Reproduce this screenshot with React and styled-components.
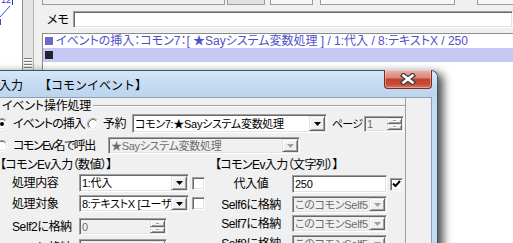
import React from "react";
import styled, { css, createGlobalStyle } from "styled-components";

const UI_FONT = `"Liberation Sans", "Noto Sans CJK JP", sans-serif`;

const GlobalStyle = createGlobalStyle`
  html, body { margin: 0; padding: 0; background: #fff; overflow: hidden; }
  #root { width: 513px; height: 243px; }
`;

const sunken = css`
  box-sizing: border-box;
  border: 1px solid;
  border-color: #a0a0a0 #ffffff #ffffff #a0a0a0;
  box-shadow: inset 1px 1px 0 #696969, inset -1px -1px 0 #e3e3e3;
`;

const raised = css`
  box-sizing: border-box;
  background: #f0f0f0;
  border: 1px solid;
  border-color: #e3e3e3 #696969 #696969 #e3e3e3;
  box-shadow: inset 1px 1px 0 #ffffff, inset -1px -1px 0 #a0a0a0;
`;

const Screen = styled.div`
  width: 513px;
  height: 243px;
  overflow: hidden;
  display: flex;
  flex-direction: column;
  background: #fff;
  font-family: ${UI_FONT};
  font-size: 12px;
  line-height: 14px;
  font-feature-settings: "palt" 1;
  color: #000;
`;

/* ---------- main editor window (behind the dialog) ---------- */

const TopArea = styled.div`
  height: 70px;
  flex-shrink: 0;
  display: flex;
`;

const TreePane = styled.div`
  width: 22px;
  background: #fff;
  border-right: 1px solid #8c8c8c;
  overflow: hidden;
  flex-shrink: 0;
`;

const Splitter = styled.div`
  width: 10px;
  flex-shrink: 0;
  background: #e4e4e4;
  border-right: 1px solid #b4b4b4;
  display: flex;
  flex-direction: column;
  justify-content: flex-end;
  align-items: center;
  padding-bottom: 1px;
`;

const MainPanel = styled.div`
  flex: 1;
  min-width: 0;
  background: #f0f0f0;
  padding-left: 8px;
  display: flex;
  flex-direction: column;
`;

const Toolbar = styled.div`
  height: 5px;
  display: flex;
  flex-shrink: 0;
`;

const ToolItem = styled.div`
  box-sizing: border-box;
  flex-shrink: 0;
  width: ${(p) => p.$w}px;
  margin-left: ${(p) => p.$ml || 0}px;
  background: ${(p) => p.$bg};
  border: 1px solid #9a9a9a;
  border-top: none;
`;

const MemoRow = styled.div`
  display: flex;
  align-items: center;
  height: 17px;
  margin-top: 6px;
`;

const MemoLabel = styled.div`
  width: 31px;
  padding-left: 5px;
  box-sizing: border-box;
  flex-shrink: 0;
`;

const MemoInput = styled.div`
  ${sunken};
  flex: 1;
  height: 17px;
  background: #fff;
`;

const EventList = styled.div`
  flex: 1;
  margin-top: 5px;
  background: #fff;
  border-top: 1px solid #8c8c8c;
  border-left: 1px solid #8c8c8c;
`;

const EventRow = styled.div`
  height: 14px;
  display: flex;
  align-items: center;
  padding-left: 2px;
  white-space: nowrap;
  color: #5050c8;
  background: ${(p) => (p.$selected ? "#c8c8f4" : "transparent")};
`;

const Marker = styled.span`
  width: 8px;
  height: 8px;
  margin-right: 3px;
  flex-shrink: 0;
  background: ${(p) => p.$color};
`;

/* ---------- dialog window ---------- */

const BottomArea = styled.div`
  flex: 1;
  min-height: 0;
  display: flex;
  background: #fff;
`;

const Dialog = styled.div`
  position: relative;
  z-index: 1;
  margin-left: -20px;
  width: 458px;
  height: 190px;
  flex-shrink: 0;
  box-sizing: border-box;
  border: 1px solid #3f5670;
  border-bottom: none;
  border-radius: 7px 7px 0 0;
  background: #c4daf1;
  box-shadow: 5px 3px 10px rgba(0, 0, 0, 0.72);
  display: flex;
  flex-direction: column;
`;

const TitleBar = styled.div`
  height: 26px;
  flex-shrink: 0;
  display: flex;
  align-items: flex-start;
  padding-left: 18px;
  border-radius: 6px 6px 0 0;
  background: linear-gradient(to bottom, #d6e7f8 0%, #c3daf1 55%, #bcd5ee 100%);
`;

const TitleText = styled.div`
  margin-top: 6px;
  font-family: "Noto Sans CJK JP", sans-serif;
  font-feature-settings: normal;
  font-size: 12px;
  line-height: 16px;
  white-space: nowrap;
`;

const TitleKind = styled.span`
  margin-left: 16px;
`;

const CloseButton = styled.div`
  margin-left: auto;
  margin-right: 5px;
  margin-top: -1px;
  width: 48px;
  height: 19px;
  box-sizing: border-box;
  border: 1px solid #7a2a22;
  border-top: none;
  border-radius: 0 0 4px 4px;
  background: linear-gradient(
    to bottom,
    #eab0a6 0%,
    #dc8678 42%,
    #c2412f 52%,
    #c64a38 78%,
    #dd7460 100%
  );
  box-shadow: inset 0 0 0 1px rgba(255, 255, 255, 0.35);
  display: flex;
  align-items: center;
  justify-content: center;
`;

const Client = styled.div`
  flex: 1;
  margin: 0 5px 0 6px;
  border: 1px solid #8ba1bb;
  border-bottom: none;
  background: #f0f0f0;
  display: flex;
`;

const Panel = styled.div`
  width: 418px;
  box-sizing: border-box;
  border-right: 1px solid #a0a0a0;
  padding-top: 2px;
  display: flex;
  flex-direction: column;
`;

const GroupHeader = styled.div`
  display: flex;
  align-items: center;
  height: 12px;
  line-height: 12px;
  padding-left: 14px;
  letter-spacing: -0.2px;
`;

const GroupLine = styled.div`
  flex: 1;
  margin-left: 2px;
  border-top: 1px solid #a0a0a0;
  border-bottom: 1px solid #fff;
`;

const OptionRow = styled.div`
  display: flex;
  align-items: center;
  height: ${(p) => p.$h}px;
  margin-top: ${(p) => p.$mt}px;
  padding-left: 8px;
`;

const RadioSvg = styled.svg`
  flex-shrink: 0;
  margin-right: ${(p) => p.$mr}px;
`;

const Caption = styled.div`
  width: ${(p) => p.$w}px;
  margin-left: ${(p) => p.$ml || 0}px;
  flex-shrink: 0;
  white-space: nowrap;
  overflow: hidden;
  text-align: ${(p) => p.$align || "left"};
  padding-left: ${(p) => p.$pl || 0}px;
  font-size: ${(p) => p.$fs || 12}px;
  letter-spacing: ${(p) => (p.$ls !== undefined ? p.$ls : -0.4)}px;
  box-sizing: border-box;
`;

const ComboFrame = styled.div`
  ${sunken};
  width: ${(p) => p.$w}px;
  height: ${(p) => p.$h}px;
  margin-left: ${(p) => p.$ml || 0}px;
  flex-shrink: 0;
  padding: 1px;
  display: flex;
  align-items: stretch;
  background: ${(p) => (p.$disabled ? "#f0f0f0" : "#fff")};
  color: ${(p) => (p.$disabled ? "#6d6d6d" : "#000")};
`;

const FieldText = styled.div`
  flex: 1;
  min-width: 0;
  padding-left: 1px;
  overflow: hidden;
  white-space: nowrap;
  display: flex;
  align-items: center;
  font-size: 11px;
  letter-spacing: -0.3px;
`;

const DropButton = styled.div`
  ${raised};
  width: 16px;
  flex-shrink: 0;
  display: flex;
  align-items: center;
  justify-content: center;
`;

const SpinButtons = styled.div`
  width: 15px;
  flex-shrink: 0;
  display: flex;
  flex-direction: column;
`;

const SpinHalf = styled.div`
  ${raised};
  flex: 1;
  display: flex;
  align-items: center;
  justify-content: center;

  &::after {
    content: "";
    width: 3px;
    height: 1px;
    background: #a0a0a0;
    box-shadow: 0 1px 0 #fff;
  }
`;

const CheckBox = styled.div`
  ${sunken};
  width: 13px;
  height: 13px;
  margin-left: 3px;
  flex-shrink: 0;
  background: #fff;
  display: flex;
  align-items: center;
  justify-content: center;
`;

const Sections = styled.div`
  display: flex;
  margin-top: 4px;
  padding-left: 12px;
`;

const Section = styled.div`
  width: ${(p) => (p.$w ? `${p.$w}px` : "auto")};
  flex: ${(p) => (p.$w ? "none" : 1)};
  display: flex;
  flex-direction: column;
`;

const SectionHeader = styled.div`
  height: 13px;
  line-height: 13px;
  margin-top: 1px;
  white-space: nowrap;
  letter-spacing: -0.6px;
`;

const FieldRow = styled.div`
  display: flex;
  align-items: center;
  height: ${(p) => p.$h}px;
  margin-top: ${(p) => p.$mt}px;
`;

/* ---------- drawings ---------- */

function TreeDrawing() {
  return (
    <svg width="22" height="70" viewBox="0 0 22 70">
      <text x="1" y="3" fontSize="9" fill="#2a3ad0" fontFamily="Liberation Sans">
        12
      </text>
      <line x1="12.5" y1="0" x2="12.5" y2="5" stroke="#2a3ad0" />
      <line x1="10" y1="6" x2="0" y2="17" stroke="#3a4ae0" />
      <line x1="0.5" y1="19" x2="0.5" y2="25" stroke="#3a4ae0" />
    </svg>
  );
}

function Grip() {
  return (
    <svg width="8" height="12" viewBox="0 0 8 12">
      {[1, 4, 7, 10].map((y) => (
        <g key={y}>
          <line x1="0" y1={y + 0.5} x2="8" y2={y + 0.5} stroke="#7a7a7a" />
          <line x1="0" y1={y + 1.5} x2="8" y2={y + 1.5} stroke="#fff" />
        </g>
      ))}
    </svg>
  );
}

function CloseGlyph() {
  return (
    <svg width="16" height="12" viewBox="0 0 16 12">
      <path d="M3.5 2.5 L12.5 9.5 M12.5 2.5 L3.5 9.5" stroke="#3c3c3c" strokeWidth="5" strokeLinecap="square" />
      <path d="M3.5 2.5 L12.5 9.5 M12.5 2.5 L3.5 9.5" stroke="#fff" strokeWidth="2.6" strokeLinecap="square" />
    </svg>
  );
}

function Radio({ checked, mr = 5 }) {
  return (
    <RadioSvg $mr={mr} width="12" height="12" viewBox="0 0 12 12">
      <circle cx="6" cy="6" r="5" fill="#fff" />
      <path d="M9.89 2.11 A5.5 5.5 0 0 0 2.11 9.89" fill="none" stroke="#a0a0a0" />
      <path d="M2.11 9.89 A5.5 5.5 0 0 0 9.89 2.11" fill="none" stroke="#fff" />
      <path d="M9.18 2.82 A4.5 4.5 0 0 0 2.82 9.18" fill="none" stroke="#696969" />
      <path d="M2.82 9.18 A4.5 4.5 0 0 0 9.18 2.82" fill="none" stroke="#e3e3e3" />
      {checked && <circle cx="6" cy="6" r="2" fill="#000" />}
    </RadioSvg>
  );
}

function Arrow({ disabled }) {
  return (
    <svg width="7" height="4" viewBox="0 0 7 4">
      <polygon points="0,0 7,0 3.5,4" fill={disabled ? "#a0a0a0" : "#000"} />
    </svg>
  );
}

function Combo({ w, h = 17, ml, disabled, children }) {
  return (
    <ComboFrame $w={w} $h={h} $ml={ml} $disabled={disabled}>
      <FieldText>{children}</FieldText>
      <DropButton>
        <Arrow disabled={disabled} />
      </DropButton>
    </ComboFrame>
  );
}

function Spin({ w, h = 17, ml, children }) {
  return (
    <ComboFrame $w={w} $h={h} $ml={ml} $disabled>
      <FieldText>{children}</FieldText>
      <SpinButtons>
        <SpinHalf />
        <SpinHalf />
      </SpinButtons>
    </ComboFrame>
  );
}

function Check({ checked }) {
  return (
    <CheckBox>
      {checked && (
        <svg width="9" height="8" viewBox="0 0 9 8">
          <polyline points="1,3.5 3.5,6 8,1" fill="none" stroke="#000" strokeWidth="2" />
        </svg>
      )}
    </CheckBox>
  );
}

const toolItems = [
  { w: 183, bg: "#f0f0f0" },
  { w: 38, ml: 2, bg: "#e1e1e1" },
  { w: 43, ml: 5, bg: "#f7f7f7" },
  { w: 135, ml: 7, bg: "#f7f7f7" },
  { w: 40, ml: 22, bg: "#f7f7f7" },
];

const leftRows = [
  { label: "処理内容", mt: 2, h: 18, kind: "combo", text: "1:代入", check: true },
  { label: "処理対象", mt: 3, h: 17, kind: "combo", text: "8:テキストX [ユーザ変数]", check: true },
  { label: "Self2に格納", mt: 6, h: 17, kind: "spin", text: "0" },
  { label: "Self3に格納", mt: 4, h: 17, kind: "spin", text: "0" },
];

const rightRows = [
  { label: "Self6に格納", mt: 3, h: 17 },
  { label: "Self7に格納", mt: 2, h: 17 },
  { label: "Self8に格納", mt: 3, h: 17 },
];

export default function App() {
  return (
    <>
      <GlobalStyle />
      <Screen>
        <TopArea>
          <TreePane>
            <TreeDrawing />
          </TreePane>
          <Splitter>
            <Grip />
          </Splitter>
          <MainPanel>
            <Toolbar>
              {toolItems.map((t, i) => (
                <ToolItem key={i} $w={t.w} $ml={t.ml} $bg={t.bg} />
              ))}
            </Toolbar>
            <MemoRow>
              <MemoLabel>メモ</MemoLabel>
              <MemoInput />
            </MemoRow>
            <EventList>
              <EventRow>
                <Marker $color="#6a6ac8" />
                <span>イベントの挿入：コモン7：[ ★Sayシステム変数処理 ] / 1:代入 / 8:テキストX / 250</span>
              </EventRow>
              <EventRow $selected>
                <Marker $color="#23232e" />
              </EventRow>
            </EventList>
          </MainPanel>
        </TopArea>

        <BottomArea>
          <Dialog>
            <TitleBar>
              <TitleText>
                入力<TitleKind>【コモンイベント】</TitleKind>
              </TitleText>
              <CloseButton>
                <CloseGlyph />
              </CloseButton>
            </TitleBar>
            <Client>
              <Panel>
                <GroupHeader>
                  イベント操作処理
                  <GroupLine />
                </GroupHeader>

                <OptionRow $h={19} $mt={2}>
                  <Radio checked />
                  <Caption $w={74} $ls={-0.9}>イベントの挿入</Caption>
                  <Radio mr={4} />
                  <Caption $w={29}>予約</Caption>
                  <Combo w={195} h={19}>コモン7:★Sayシステム変数処理</Combo>
                  <Caption $w={32} $ml={5} $fs={11} $ls={-0.8}>ページ</Caption>
                  <Spin w={40} h={16}>1</Spin>
                </OptionRow>

                <OptionRow $h={17} $mt={4}>
                  <Radio />
                  <Caption $w={95} $ls={-1.4}>コモンEv名で呼出</Caption>
                  <Combo w={192} disabled>★Sayシステム変数処理</Combo>
                </OptionRow>

                <Sections>
                  <Section $w={215}>
                    <SectionHeader>【コモンEv入力（数値）】</SectionHeader>
                    {leftRows.map((r) => (
                      <FieldRow key={r.label} $h={r.h} $mt={r.mt}>
                        <Caption $w={79} $pl={12}>{r.label}</Caption>
                        {r.kind === "combo" ? (
                          <Combo w={110} h={r.h}>{r.text}</Combo>
                        ) : (
                          <Spin w={88} h={r.h}>{r.text}</Spin>
                        )}
                        {r.check && <Check />}
                      </FieldRow>
                    ))}
                  </Section>

                  <Section>
                    <SectionHeader>【コモンEv入力（文字列）】</SectionHeader>
                    <FieldRow $h={18} $mt={3}>
                      <Caption $w={72} $align="center">代入値</Caption>
                      <ComboFrame $w={95} $h={18} $ml={5}>
                        <FieldText>250</FieldText>
                      </ComboFrame>
                      <Check checked />
                    </FieldRow>
                    {rightRows.map((r) => (
                      <FieldRow key={r.label} $h={r.h} $mt={r.mt}>
                        <Caption $w={72} $align="center">{r.label}</Caption>
                        <Combo w={95} h={r.h} ml={5} disabled>このコモンSelf5</Combo>
                      </FieldRow>
                    ))}
                  </Section>
                </Sections>
              </Panel>
            </Client>
          </Dialog>
        </BottomArea>
      </Screen>
    </>
  );
}
